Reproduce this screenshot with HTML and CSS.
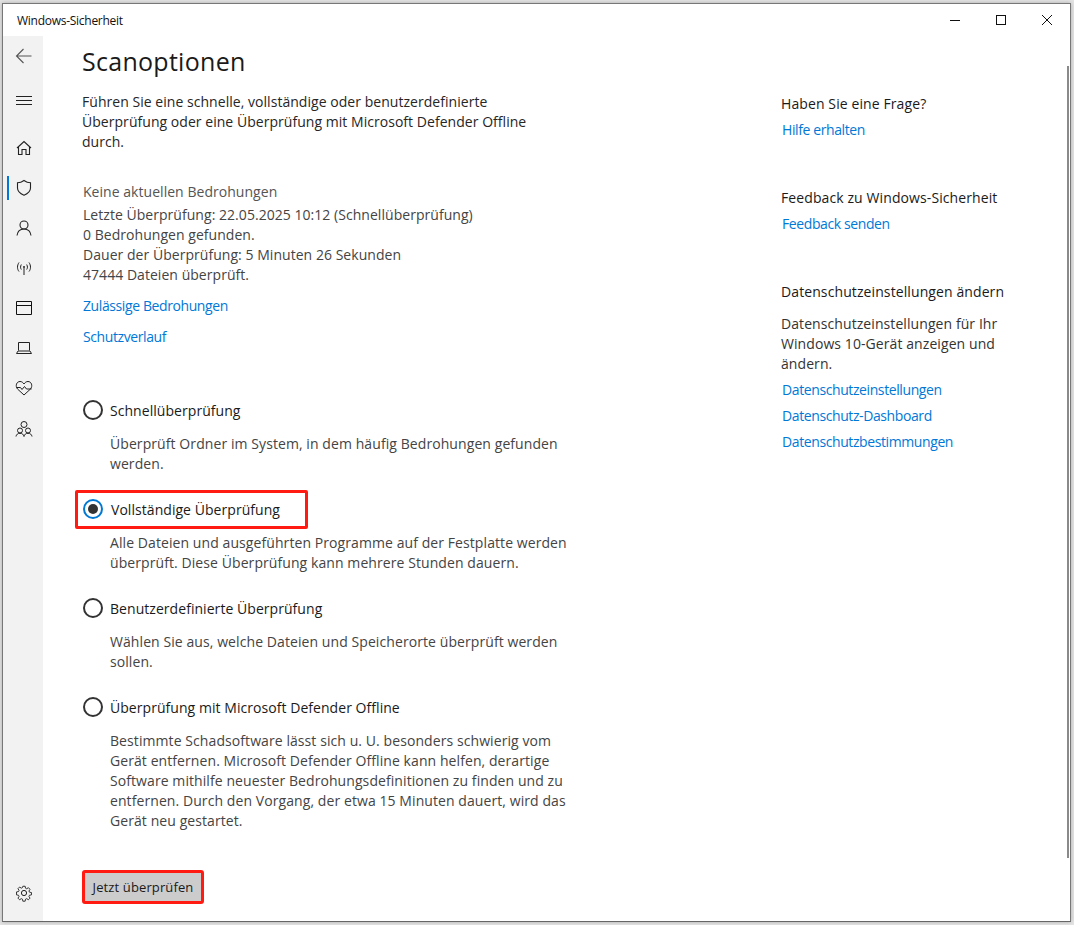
FILE: index.html
```html
<!DOCTYPE html>
<html lang="de">
<head>
<meta charset="utf-8">
<title>Windows-Sicherheit</title>
<link rel="stylesheet" href="styles.css">
</head>
<body>
<div class="window">
  <header class="titlebar">
    <span class="title">Windows-Sicherheit</span>
    <div class="controls">
      <svg class="ctl" width="46" height="32" viewBox="0 0 46 32"><path d="M18 16.500h10" stroke="#111" fill="none"/></svg>
      <svg class="ctl" width="46" height="32" viewBox="0 0 46 32"><rect x="18.500" y="11.500" width="9" height="9" stroke="#111" fill="none"/></svg>
      <svg class="ctl" width="46" height="32" viewBox="0 0 46 32"><path d="M18 11l10 10M28 11l-10 10" stroke="#111" fill="none"/></svg>
    </div>
  </header>
  <div class="body">
    <nav class="sidebar">
      <div class="nav-top">
        <div class="nav-item back"><svg width="20" height="20" viewBox="0 0 20 20"><path d="M17.500 10H2.500M9.500 3l-7 7 7 7" stroke="#555" stroke-width="1.100" fill="none"/></svg></div>
        <div class="nav-item burger"><svg width="18" height="14" viewBox="0 0 18 14"><path d="M1 3.500h16M1 7.500h16M1 11.500h16" stroke="#222" fill="none"/></svg></div>
        <div class="nav-item"><svg width="18" height="18" viewBox="0 0 18 18"><path d="M2 9l7-6.500L16 9M3.500 8v7.500h3.500v-5h4v5h3.500V8" stroke="#222" stroke-width="1.100" fill="none"/></svg></div>
        <div class="nav-item active"><svg width="18" height="18" viewBox="0 0 18 18"><path d="M9 1.500c2 1.500 4 2.300 6.500 2.300V9c0 3.500-3 5.800-6.500 7.200C5.500 14.800 2.500 12.500 2.500 9V3.800C5 3.800 7 3 9 1.500z" stroke="#222" stroke-width="1.100" fill="none"/></svg></div>
        <div class="nav-item"><svg width="18" height="18" viewBox="0 0 18 18"><circle cx="9" cy="6" r="4" stroke="#222" stroke-width="1.100" fill="none"/><path d="M2 16.500c.5-4 3.200-6.500 7-6.500s6.500 2.500 7 6.500" stroke="#222" stroke-width="1.100" fill="none"/></svg></div>
        <div class="nav-item"><svg width="18" height="18" viewBox="0 0 18 18"><path d="M9 9v7M4 3.500C2 6.500 2 10 4 12.500M14 3.500c2 3 2 6.500 0 9M6.300 5.500c-1 2-1 3.500 0 5M11.700 5.500c1 2 1 3.500 0 5" stroke="#222" fill="none"/><circle cx="9" cy="8" r="1" fill="#222"/></svg></div>
        <div class="nav-item"><svg width="18" height="16" viewBox="0 0 18 16"><path d="M1.500 1.500h15v13h-15zM1.500 5.500h15" stroke="#111" fill="none"/></svg></div>
        <div class="nav-item"><svg width="18" height="14" viewBox="0 0 18 14"><path d="M3.500 9.500v-8h11v8M1.500 12.500h15l-1.500-2.500H3z" stroke="#222" fill="none"/></svg></div>
        <div class="nav-item"><svg width="18" height="16" viewBox="0 0 18 16"><path d="M9 15L2.500 9C0 6 1.500 1.500 5 1.500 6.800 1.500 8 2.500 9 4c1-1.500 2.200-2.500 4-2.500 3.500 0 5 4.500 2.500 7.500z" stroke="#222" fill="none"/><path d="M1.500 7.500h4l1.500 2 2.500-3 2 2.500h5" stroke="#222" fill="none"/></svg></div>
        <div class="nav-item family"><svg width="18" height="18" viewBox="0 0 18 18"><circle cx="9" cy="4.500" r="3" stroke="#222" fill="none"/><circle cx="5" cy="10.500" r="2.500" stroke="#222" fill="none"/><circle cx="13" cy="10.500" r="2.500" stroke="#222" fill="none"/><path d="M1 16.500c.3-2 1.800-3.200 4-3.200s3.700 1.200 4 3.200c.3-2 1.800-3.200 4-3.200s3.700 1.200 4 3.200" stroke="#222" fill="none"/></svg></div>
      </div>
      <div class="nav-item"><svg width="18" height="18" viewBox="0 0 18 18"><circle cx="9" cy="9" r="2.600" stroke="#222" fill="none"/><path d="M7.700 1.500h2.600l.4 2.200 1.300.6 1.900-1.200 1.800 1.800-1.200 1.900.6 1.300 2.200.4v2.600l-2.200.4-.6 1.300 1.200 1.900-1.800 1.800-1.900-1.200-1.300.6-.4 2.200H7.700l-.4-2.200-1.300-.6-1.900 1.200-1.800-1.800 1.200-1.900-.6-1.300-2.200-.4V7.800l2.200-.4.600-1.300-1.200-1.900 1.800-1.800 1.900 1.200 1.300-.6z" transform="translate(.9 .9) scale(.9)" stroke="#222" fill="none"/></svg></div>
    </nav>
    <main class="content">
      <section class="primary">
        <h1 class="heading">Scanoptionen</h1>
        <p class="intro">Führen Sie eine schnelle, vollständige oder benutzerdefinierte<br>Überprüfung oder eine Überprüfung mit Microsoft Defender Offline<br>durch.</p>
        <div class="status">
          <p class="status-head">Keine aktuellen Bedrohungen</p>
          <p class="status-body">Letzte Überprüfung: 22.05.2025 10:12 (Schnellüberprüfung)<br>0 Bedrohungen gefunden.<br>Dauer der Überprüfung: 5 Minuten 26 Sekunden<br>47444 Dateien überprüft.</p>
        </div>
        <a class="link link-first">Zulässige Bedrohungen</a>
        <a class="link link-second">Schutzverlauf</a>
        <div class="options">
          <div class="option">
            <div class="radio-row"><span class="radio"></span><span class="label">Schnellüberprüfung</span></div>
            <p class="desc">Überprüft Ordner im System, in dem häufig Bedrohungen gefunden<br>werden.</p>
          </div>
          <div class="option">
            <div class="radio-row selected"><span class="radio on"></span><span class="label">Vollständige Überprüfung</span><span class="highlight"></span></div>
            <p class="desc">Alle Dateien und ausgeführten Programme auf der Festplatte werden<br>überprüft. Diese Überprüfung kann mehrere Stunden dauern.</p>
          </div>
          <div class="option">
            <div class="radio-row"><span class="radio"></span><span class="label">Benutzerdefinierte Überprüfung</span></div>
            <p class="desc">Wählen Sie aus, welche Dateien und Speicherorte überprüft werden<br>sollen.</p>
          </div>
          <div class="option">
            <div class="radio-row"><span class="radio"></span><span class="label">Überprüfung mit Microsoft Defender Offline</span></div>
            <p class="desc">Bestimmte Schadsoftware lässt sich u. U. besonders schwierig vom<br>Gerät entfernen. Microsoft Defender Offline kann helfen, derartige<br>Software mithilfe neuester Bedrohungsdefinitionen zu finden und zu<br>entfernen. Durch den Vorgang, der etwa 15 Minuten dauert, wird das<br>Gerät neu gestartet.</p>
          </div>
        </div>
        <button class="scan">Jetzt überprüfen</button>
      </section>
      <aside class="aside">
        <div class="aside-group">
          <h2 class="aside-head">Haben Sie eine Frage?</h2>
          <a class="link aside-link">Hilfe erhalten</a>
        </div>
        <div class="aside-group">
          <h2 class="aside-head">Feedback zu Windows-Sicherheit</h2>
          <a class="link aside-link">Feedback senden</a>
        </div>
        <div class="aside-group">
          <h2 class="aside-head">Datenschutzeinstellungen ändern</h2>
          <p class="aside-text">Datenschutzeinstellungen für Ihr<br>Windows 10-Gerät anzeigen und<br>ändern.</p>
          <a class="link aside-link tight">Datenschutzeinstellungen</a>
          <a class="link aside-link tight">Datenschutz-Dashboard</a>
          <a class="link aside-link tight">Datenschutzbestimmungen</a>
        </div>
      </aside>
    </main>
    <div class="scrollbar"></div>
  </div>
</div>
</body>
</html>
```

FILE: styles.css
```css
* { box-sizing: border-box; }
html, body { margin: 0; padding: 0; background: #e4e4e4; }
body {
  width: 1074px; height: 925px; overflow: hidden; padding: 3px 3px 3px 2px;
  font-family: "Open Sans", "Noto Sans", sans-serif;
  font-size: 14px; line-height: 20px; color: #222;
}
p, h1, h2 { margin: 0; font-weight: 400; }
.window {
  width: 1069px; height: 919px; background: #fff;
  border: 1px solid #777; border-bottom-color: #666;
  display: flex; flex-direction: column;
  box-shadow: 0 0 4px rgba(0,0,0,.25);
}
.titlebar { height: 32px; display: flex; justify-content: space-between; align-items: center; flex: none; }
.title { padding: 2px 0 0 14px; font-size: 12px; color: #111; letter-spacing: -.27px; }
.controls { display: flex; }
.ctl { display: block; }
.body { flex: 1; display: flex; position: relative; min-height: 0; }
.sidebar {
  width: 40px; flex: none; background: #f2f2f2;
  display: flex; flex-direction: column; justify-content: space-between;
  padding-bottom: 8px;
}
.nav-top { display: flex; flex-direction: column; }
.nav-item { height: 40px; display: flex; align-items: center; justify-content: center; position: relative; padding-left: 2px; flex: none; }
.nav-item.burger { height: 48px; margin-bottom: 4px; }
.nav-item.active::before {
  content: ""; position: absolute; left: 4px; top: 8px; width: 2px; height: 24px; background: #0078d4;
}
.nav-item.family { margin-top: 1px; }
.content { flex: 1; display: flex; min-width: 0; }
.primary { width: 738px; padding-left: 39px; flex: none; }
.heading { font-size: 25px; line-height: 34px; color: #1a1a1a; margin-top: 8px; letter-spacing: .28px; }
.intro { margin-top: 14px; letter-spacing: .04px; white-space: nowrap; color: #262626; }
.status { margin-top: 30px; color: #444; padding-left: 1px; letter-spacing: .04px; }
.status-head { color: #555; }
.status-body { margin-top: 3px; }
.link { display: block; color: #0078d7; letter-spacing: -.4px; }
.link-first { margin: 11px 0 0 1px; }
.link-second { margin: 11px 0 0 1px; }
.options { margin-top: 51px; }
.option { margin-bottom: 23px; }
.radio-row { display: flex; align-items: center; height: 24px; position: relative; }
.radio { width: 20px; height: 20px; border-radius: 50%; border: 2px solid #333; flex: none; margin-left: 1px; }
.radio.on { border-color: #0078d4; background: #fff; position: relative; }
.radio.on::after { content: ""; position: absolute; left: 3px; top: 3px; width: 10px; height: 10px; border-radius: 50%; background: #333; }
.label { margin-left: 7px; padding-top: 2px; color: #1a1a1a; letter-spacing: .05px; }
.selected .label { margin-left: 8px; }
.highlight {
  position: absolute; left: -7px; top: -7px; width: 233px; height: 39px;
  border: 3px solid #ff1a12; border-radius: 2px;
}
.desc { margin: 12px 0 0 28px; color: #444; letter-spacing: .08px; white-space: nowrap; }
.scan {
  display: block; margin-top: 39px; margin-left: 0;
  width: 122px; height: 34px; padding: 0;
  background: #ccc; border: 3px solid #ff1a12; border-radius: 3px;
  font: inherit; font-size: 13px; color: #1a1a1a; letter-spacing: .12px;
}
.aside { flex: 1; padding-top: 58px; }
.aside-group { margin-bottom: 48px; }
.aside-head { font-size: 14px; line-height: 20px; color: #1a1a1a; letter-spacing: .1px; margin-top: 21px; }
.aside-group:first-child .aside-head { margin-top: 0; }
.aside-link { margin: 6px 0 0 1px; }
.aside-text { margin-top: 12px; color: #333; letter-spacing: .08px; }
.scrollbar { position: absolute; right: 1px; top: 30px; width: 2px; height: 792px; background: #8a8a8a; }
```
